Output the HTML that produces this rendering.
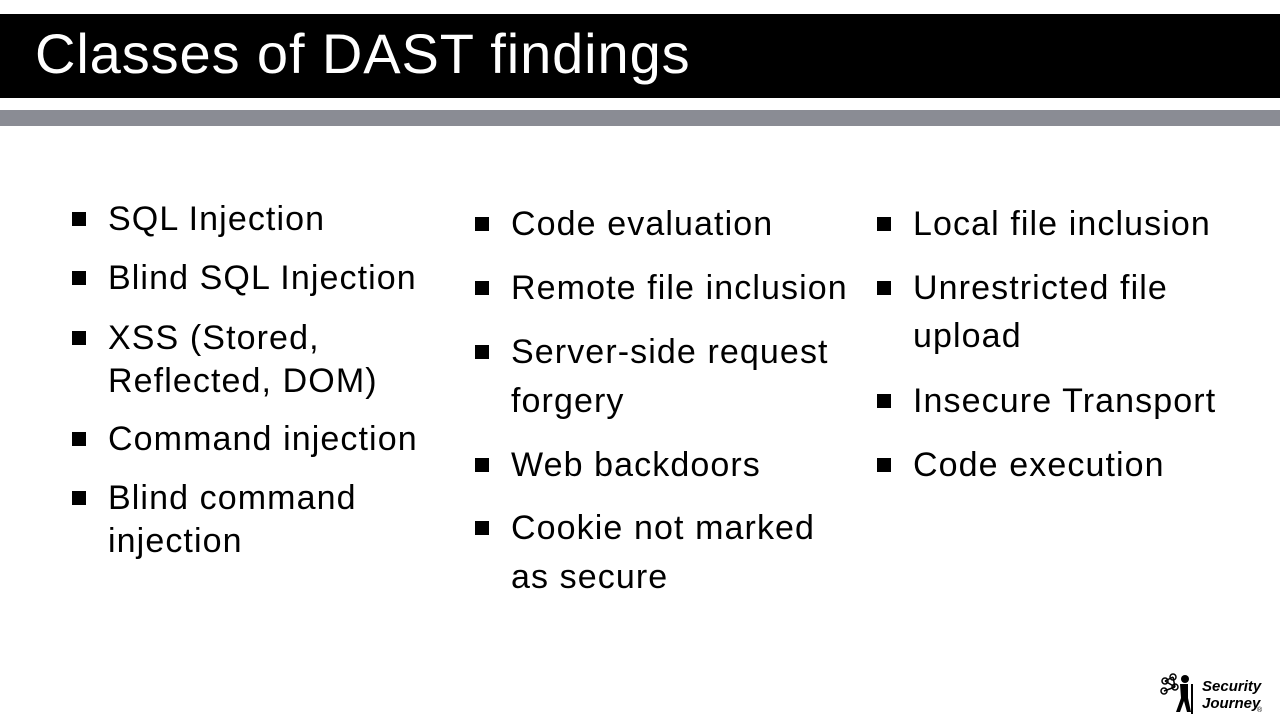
<!DOCTYPE html>
<html><head><style>
body{margin:0;width:1280px;height:720px;background:#fff;position:relative;overflow:hidden;font-family:"Liberation Sans",sans-serif;}
.bar{position:absolute;left:0;top:14px;width:1280px;height:84px;background:#000;}
.title{position:absolute;left:35px;top:14px;height:84px;line-height:80px;color:#fff;font-size:56px;letter-spacing:0.9px;white-space:nowrap;}
.gray{position:absolute;left:0;top:110px;width:1280px;height:16px;background:#8a8c94;}
.t{position:absolute;font-size:34px;line-height:40px;height:40px;color:#000;white-space:nowrap;letter-spacing:1.1px;}
.b{position:absolute;width:14px;height:14px;background:#000;}
.logo{position:absolute;left:1158px;top:672px;}
</style></head><body>
<div class="bar"></div><div class="title">Classes of DAST findings</div>
<div class="gray"></div>

<div class="b" style="left:72px;top:212px"></div><div class="t" style="left:108px;top:199px">SQL Injection</div>
<div class="b" style="left:72px;top:271px"></div><div class="t" style="left:108px;top:258px">Blind SQL Injection</div>
<div class="b" style="left:72px;top:331px"></div><div class="t" style="left:108px;top:318px">XSS (Stored,</div>
<div class="t" style="left:108px;top:361px">Reflected, DOM)</div>
<div class="b" style="left:72px;top:432px"></div><div class="t" style="left:108px;top:419px">Command injection</div>
<div class="b" style="left:72px;top:491px"></div><div class="t" style="left:108px;top:478px">Blind command</div>
<div class="t" style="left:108px;top:521px">injection</div>

<div class="b" style="left:475px;top:217px"></div><div class="t" style="left:511px;top:204px">Code evaluation</div>
<div class="b" style="left:475px;top:281px"></div><div class="t" style="left:511px;top:268px">Remote file inclusion</div>
<div class="b" style="left:475px;top:345px"></div><div class="t" style="left:511px;top:332px">Server-side request</div>
<div class="t" style="left:511px;top:381px">forgery</div>
<div class="b" style="left:475px;top:458px"></div><div class="t" style="left:511px;top:445px">Web backdoors</div>
<div class="b" style="left:475px;top:521px"></div><div class="t" style="left:511px;top:508px">Cookie not marked</div>
<div class="t" style="left:511px;top:557px">as secure</div>

<div class="b" style="left:877px;top:217px"></div><div class="t" style="left:913px;top:204px">Local file inclusion</div>
<div class="b" style="left:877px;top:281px"></div><div class="t" style="left:913px;top:268px">Unrestricted file</div>
<div class="t" style="left:913px;top:316px">upload</div>
<div class="b" style="left:877px;top:394px"></div><div class="t" style="left:913px;top:381px">Insecure Transport</div>
<div class="b" style="left:877px;top:458px"></div><div class="t" style="left:913px;top:445px">Code execution</div>

<div class="logo">
<svg width="110" height="46" viewBox="0 0 110 46">
<g stroke="#000" stroke-width="1.5" fill="none"><circle cx="7" cy="9" r="3"/><circle cx="15" cy="5" r="3"/><circle cx="6" cy="19" r="3"/><circle cx="17" cy="15" r="3"/><path d="M7 9L15 5M7 9L17 15M6 19L17 15M15 5L17 15"/></g>
<circle cx="27" cy="7" r="4" fill="#000"/>
<path d="M22 12L30 12L30 26L33 40L29 40L26 29L22 40L18 40L23 26Z" fill="#000"/>
<path d="M34 12L34 42" stroke="#000" stroke-width="2"/>
<text x="44" y="19" font-family="Liberation Sans" font-weight="bold" font-style="italic" font-size="15">Security</text>
<text x="44" y="36" font-family="Liberation Sans" font-weight="bold" font-style="italic" font-size="15">Journey</text>
<text x="99" y="40" font-family="Liberation Sans" font-size="7">®</text>
</svg>
</div>
</body></html>
